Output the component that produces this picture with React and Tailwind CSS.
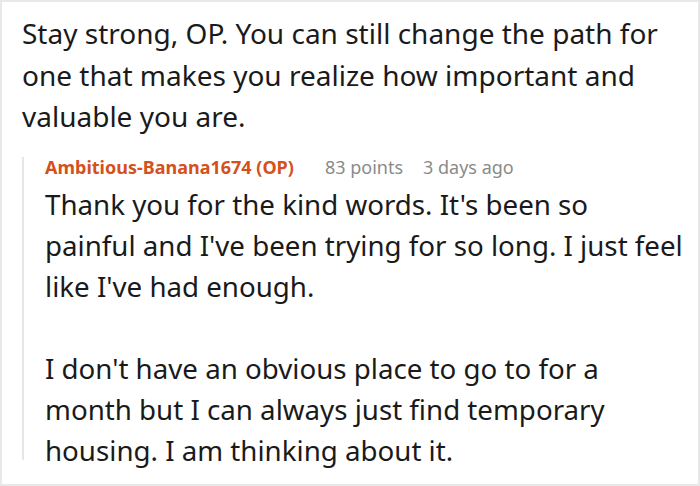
import React from 'react';

const App = () => {
    return (
        <div className="w-[700px] h-[486px] bg-white border-2 border-[#e8e8e8] overflow-hidden" style={{ fontFamily: '"Noto Sans", sans-serif' }}>
            <div className="pl-[20px] pt-[11px] text-[28px] leading-[41.5px] text-[#1a1a1b]">
                <p>Stay strong, OP. You can still change the path for<br />one that makes you realize how important and<br />valuable you are.</p>
            </div>

            <div className="ml-[20px] mt-[28px] border-l-2 border-[#e6e6e6] pl-[21px] h-[303px]">
                <div className="-mt-[9px] flex items-center text-[18px] leading-[20px]">
                    <span className="font-bold text-[#d4511c]">Ambitious-Banana1674 (OP)</span>
                    <span className="ml-[31px] text-[#8a8a8a]">83 points</span>
                    <span className="ml-[20px] text-[#8a8a8a]">3 days ago</span>
                </div>
                <div className="mt-[7px] text-[27.7px] leading-[41px] text-[#1a1a1b]">
                    <p>Thank you for the kind words. It's been so<br />painful and I've been trying for so long. I just feel<br />like I've had enough.</p>
                    <p className="mt-[41px]">I don't have an obvious place to go to for a<br />month but I can always just find temporary<br />housing. I am thinking about it.</p>
                </div>
            </div>
        </div>
    );
};

export default App;
